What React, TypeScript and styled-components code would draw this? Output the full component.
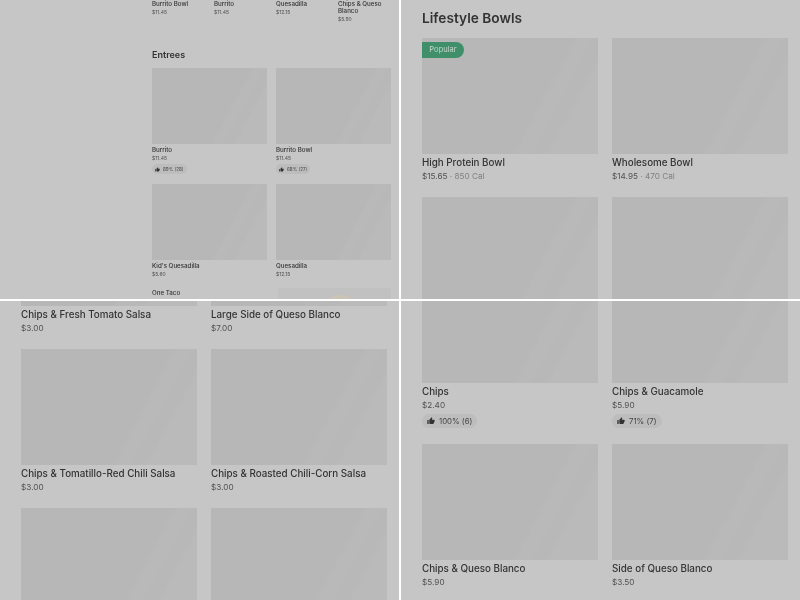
import React from "react";
import styled, { createGlobalStyle } from "styled-components";

const Global = createGlobalStyle`
    html, body {
        margin: 0;
        padding: 0;
        background: #fff;
    }
    body {
        font-family: Inter, "Liberation Sans", sans-serif;
    }
`;

const Board = styled.div`
    width: 800px;
    height: 600px;
    display: grid;
    grid-template-columns: 399px 401px;
    grid-template-rows: 299px 301px;
    overflow: hidden;
    background: #fff;
`;

const Panel = styled.section<{ $left?: boolean; $top?: boolean }>`
    overflow: hidden;
    background: #c6c6c6;
    box-sizing: border-box;
    ${({ $left }) => !$left && "border-left: 2px solid #fff;"}
    ${({ $top }) => !$top && "border-top: 2px solid #fff;"}
`;

/* will-change keeps the text on its own layer, so it gets grey antialiasing */
const Scroll = styled.div<{ $pad: number; $shift: number; $width: number }>`
    margin-top: ${({ $shift }) => $shift}px;
    margin-left: ${({ $pad }) => $pad}px;
    width: ${({ $width }) => $width}px;
    will-change: opacity;
`;

const Heading = styled.h2<{ $small?: boolean }>`
    margin: 0;
    color: #333;
    font-weight: 600;
    font-size: ${({ $small }) => ($small ? "9px" : "13.7px")};
    line-height: ${({ $small }) => ($small ? "12px" : "20px")};
    margin-top: ${({ $small }) => ($small ? "26px" : "0")};
    margin-bottom: ${({ $small }) => ($small ? "7px" : "10px")};
`;

const Grid = styled.div<{ $cols: number; $gap: number; $rowGap: number }>`
    display: grid;
    grid-template-columns: repeat(${({ $cols }) => $cols}, 1fr);
    column-gap: ${({ $gap }) => $gap}px;
    row-gap: ${({ $rowGap }) => $rowGap}px;
`;

const Thumb = styled.div<{ $h: number }>`
    position: relative;
    height: ${({ $h }) => $h}px;
    background: linear-gradient(
        118deg,
        #b7b7b7 0%,
        #b7b7b7 64%,
        #b9b9b9 66%,
        #b9b9b9 71%,
        #b8b8b8 73%,
        #b8b8b8 78%,
        #bababa 80%,
        #bababa 100%
    );
`;

const Badge = styled.span`
    position: absolute;
    left: 0;
    top: 4px;
    height: 16px;
    width: 42px;
    border-radius: 0 8px 8px 0;
    background: #3f8f6a;
    color: #c4d6cc;
    font-size: 7.6px;
    line-height: 16px;
    text-align: center;
`;

const Name = styled.div<{ $small?: boolean }>`
    color: #333;
    font-weight: 500;
    font-size: ${({ $small }) => ($small ? "6.2px" : "9.8px")};
    line-height: ${({ $small }) => ($small ? "7px" : "13px")};
    margin-top: 2px;
`;

const Price = styled.div<{ $small?: boolean }>`
    color: #505050;
    font-size: ${({ $small }) => ($small ? "5px" : "8.2px")};
    line-height: ${({ $small }) => ($small ? "8px" : "14px")};
    margin-top: ${({ $small }) => ($small ? "1px" : "0")};
`;

const Cal = styled.span`
    color: #808080;
`;

const Rating = styled.div<{ $small?: boolean }>`
    display: flex;
    align-items: center;
    width: fit-content;
    gap: ${({ $small }) => ($small ? "3px" : "4px")};
    margin-top: 2px;
    margin-bottom: ${({ $small }) => ($small ? "0" : "2px")};
    padding: ${({ $small }) => ($small ? "0 3px" : "0 5px")};
    height: ${({ $small }) => ($small ? "10px" : "14px")};
    border-radius: 7px;
    background: #bdbdbd;
    color: #454545;
    font-size: ${({ $small }) => ($small ? "4.6px" : "7.8px")};
    svg {
        width: ${({ $small }) => ($small ? "5px" : "8px")};
        height: ${({ $small }) => ($small ? "5px" : "8px")};
        fill: #333;
    }
`;

const Blob = styled.div`
    position: absolute;
    left: 49px;
    top: 7px;
    width: 26px;
    height: 14px;
    border-radius: 50%;
    background: #cbc3b5;
`;

const TacoRow = styled.div`
    display: grid;
    grid-template-columns: 1fr 1fr;
    column-gap: 9px;
    margin-top: 9px;
`;

const TacoThumb = styled.div`
    position: relative;
    height: 40px;
    margin: 1px 0 0 2px;
    background: #c1c1c1;
`;

function Thumbs() {
    return (
        <svg viewBox="0 0 24 24">
            <path d="M1 21h4V9H1v12zm22-11c0-1.1-.9-2-2-2h-6.31l.95-4.57.03-.32c0-.41-.17-.79-.44-1.06L14.17 1 7.59 7.59C7.22 7.95 7 8.45 7 9v10c0 1.1.9 2 2 2h9c.83 0 1.54-.5 1.84-1.22l3.02-7.05c.09-.23.14-.47.14-.73v-2z" />
        </svg>
    );
}

type Item = { name?: string; price: string; cal?: string; rating?: string; popular?: boolean };

function Card({ item, small, h }: { item: Item; small?: boolean; h: number }) {
    return (
        <div>
            {h > 0 && <Thumb $h={h}>{item.popular && <Badge>Popular</Badge>}</Thumb>}
            {item.name && <Name $small={small}>{item.name}</Name>}
            {item.price && (
                <Price $small={small}>
                    {item.price}
                    {item.cal && <Cal> · {item.cal}</Cal>}
                </Price>
            )}
            {item.rating && (
                <Rating $small={small}>
                    <Thumbs />
                    {item.rating}
                </Rating>
            )}
        </div>
    );
}

const featured: Item[] = [
    { name: "Burrito Bowl", price: "$11.45" },
    { name: "Burrito", price: "$11.45" },
    { name: "Quesadilla", price: "$12.15" },
    { name: "Chips & Queso Blanco", price: "$5.90" },
];

const entrees: Item[] = [
    { name: "Burrito", price: "$11.45", rating: "89% (28)" },
    { name: "Burrito Bowl", price: "$11.45", rating: "68% (27)" },
    { name: "Kid's Quesadilla", price: "$5.60" },
    { name: "Quesadilla", price: "$12.15" },
];

const bowls: Item[] = [
    { name: "High Protein Bowl", price: "$15.65", cal: "850 Cal", popular: true },
    { name: "Wholesome Bowl", price: "$14.95", cal: "470 Cal" },
    { price: "" },
    { price: "" },
];

const sides: Item[] = [
    { name: "Chips & Fresh Tomato Salsa", price: "$3.00" },
    { name: "Large Side of Queso Blanco", price: "$7.00" },
    { name: "Chips & Tomatillo-Red Chili Salsa", price: "$3.00" },
    { name: "Chips & Roasted Chili-Corn Salsa", price: "$3.00" },
    { price: "" },
    { price: "" },
];

const chips: Item[] = [
    { name: "Chips", price: "$2.40", rating: "100% (6)" },
    { name: "Chips & Guacamole", price: "$5.90", rating: "71% (7)" },
    { name: "Chips & Queso Blanco", price: "$5.90" },
    { name: "Side of Queso Blanco", price: "$3.50" },
];

export default function App() {
    return (
        <>
            <Global />
            <Board>
                <Panel $left $top>
                    <Scroll $pad={152} $shift={-2} $width={239}>
                        <Grid $cols={4} $gap={9} $rowGap={0}>
                            {featured.map((item) => (
                                <Card key={item.name} item={item} small h={0} />
                            ))}
                        </Grid>
                        <Heading $small>Entrees</Heading>
                        <Grid $cols={2} $gap={9} $rowGap={10}>
                            {entrees.map((item) => (
                                <Card key={item.name} item={item} small h={76} />
                            ))}
                        </Grid>
                        <TacoRow>
                            <Name $small>One Taco</Name>
                            <TacoThumb>
                                <Blob />
                            </TacoThumb>
                        </TacoRow>
                    </Scroll>
                </Panel>
                <Panel $top>
                    <Scroll $pad={21} $shift={8} $width={366}>
                        <Heading>Lifestyle Bowls</Heading>
                        <Grid $cols={2} $gap={14} $rowGap={14}>
                            {bowls.map((item, i) => (
                                <Card key={i} item={item} h={116} />
                            ))}
                        </Grid>
                    </Scroll>
                </Panel>
                <Panel $left>
                    <Scroll $pad={21} $shift={-111} $width={366}>
                        <Grid $cols={2} $gap={14} $rowGap={14}>
                            {sides.map((item, i) => (
                                <Card key={i} item={item} h={116} />
                            ))}
                        </Grid>
                    </Scroll>
                </Panel>
                <Panel>
                    <Scroll $pad={21} $shift={-34} $width={366}>
                        <Grid $cols={2} $gap={14} $rowGap={14}>
                            {chips.map((item, i) => (
                                <Card key={i} item={item} h={116} />
                            ))}
                        </Grid>
                    </Scroll>
                </Panel>
            </Board>
        </>
    );
}
